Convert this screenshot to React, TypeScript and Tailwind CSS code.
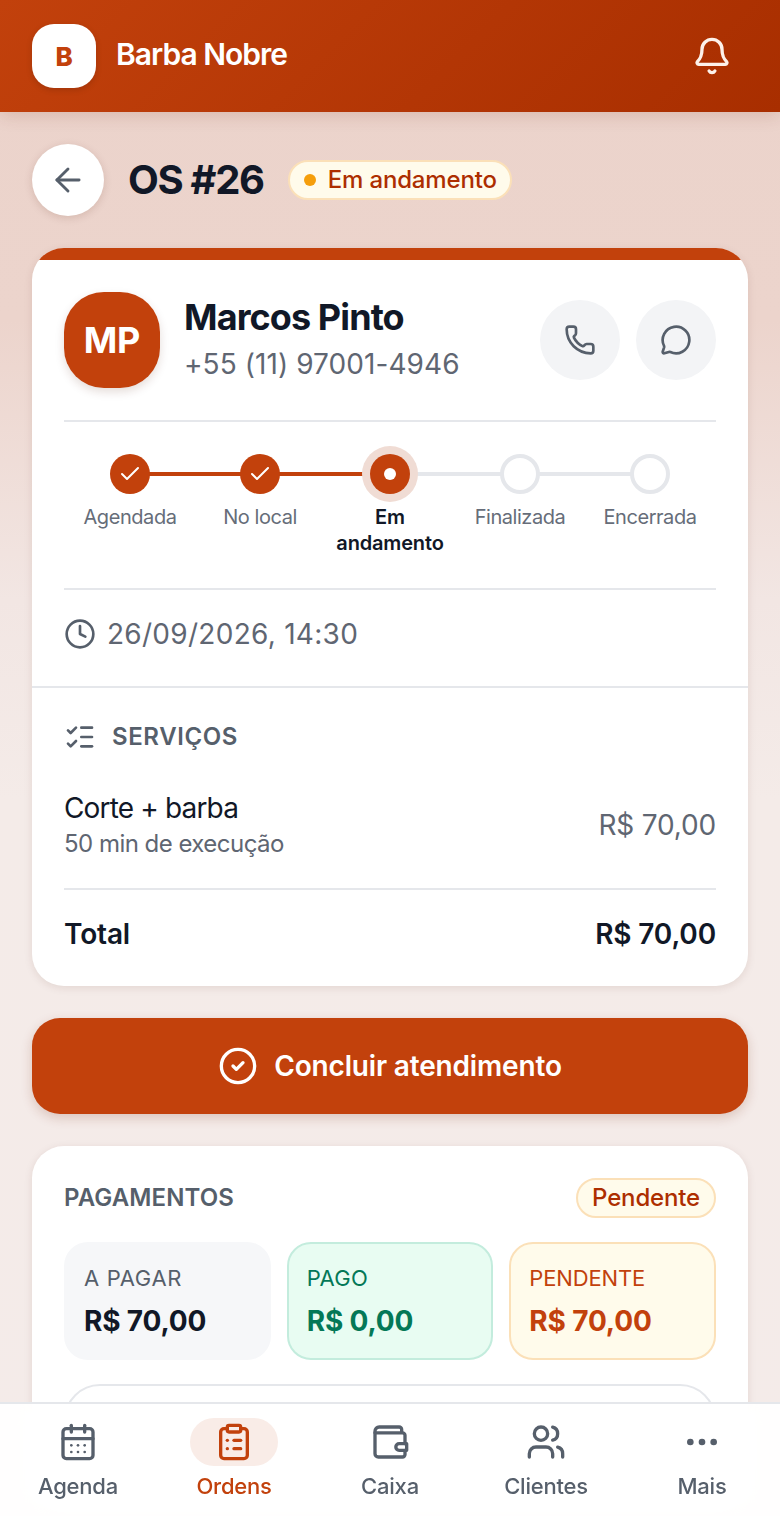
import { ArrowLeft, Bell, Check, CircleCheck, ClipboardList, Clock, Ellipsis, ListChecks, MessageCircle, Phone, Users } from "lucide-react";

const steps = [
  { label: "Agendada", state: "done" },
  { label: "No local", state: "done" },
  { label: "Em andamento", state: "active" },
  { label: "Finalizada", state: "todo" },
  { label: "Encerrada", state: "todo" },
];

function Stepper() {
  return (
    <div className="grid grid-cols-5 px-px pt-8 pb-8">
      {steps.map((s, i) => (
        <div key={s.label} className="relative flex flex-col items-center">
          {i < 4 && (
            <div className={`absolute left-1/2 top-[18px] h-1 w-full ${i < 2 ? "bg-[#c2410c]" : "bg-[#e5e7eb]"}`} />
          )}
          {s.state === "done" && (
            <div className="relative flex h-10 w-10 items-center justify-center rounded-full bg-[#c2410c]">
              <Check size={24} color="#ffffff" strokeWidth={2} />
            </div>
          )}
          {s.state === "active" && (
            <div className="relative flex h-10 w-10 items-center justify-center rounded-full bg-[#c2410c] shadow-[0_0_0_8px_#f0dcd4]">
              <div className="h-3 w-3 rounded-full bg-white" />
            </div>
          )}
          {s.state === "todo" && (
            <div className="relative h-10 w-10 rounded-full border-4 border-[#e5e7eb] bg-white" />
          )}
          <div
            className={`mt-[10px] w-[120px] text-center text-[20px] leading-[26px] ${
              s.state === "active" ? "font-semibold text-[#111827]" : "tracking-[-0.022em] text-[#666d79]"
            }`}
          >
            {s.state === "active" ? (
              <>
                Em
                <br />
                andamento
              </>
            ) : (
              s.label
            )}
          </div>
        </div>
      ))}
    </div>
  );
}

function CalendarIcon() {
  return (
    <svg width="40" height="40" viewBox="0 0 24 24" fill="none" stroke="currentColor" strokeWidth="2" strokeLinecap="round" strokeLinejoin="round">
      <path d="M8 2v4" />
      <path d="M16 2v4" />
      <rect x="3" y="4" width="18" height="18" rx="2" />
      <path d="M3 10h18" />
      <g fill="currentColor" stroke="none">
        <circle cx="8" cy="14" r="0.8" />
        <circle cx="12" cy="14" r="0.8" />
        <circle cx="16" cy="14" r="0.8" />
        <circle cx="8" cy="18" r="0.8" />
        <circle cx="12" cy="18" r="0.8" />
        <circle cx="16" cy="18" r="0.8" />
      </g>
    </svg>
  );
}

function WalletIcon() {
  return (
    <svg width="40" height="40" viewBox="0 0 24 24" fill="none" stroke="currentColor" strokeWidth="2" strokeLinecap="round" strokeLinejoin="round">
      <path d="M19 6V4.5A1.5 1.5 0 0 0 17.5 3H5.5A2.5 2.5 0 0 0 3 5.5V19a2 2 0 0 0 2 2h14.5a1.5 1.5 0 0 0 1.5-1.5V17" />
      <path d="M3 6.5h16.5A1.5 1.5 0 0 1 21 8v5" />
      <path d="M17.5 13H22v4h-4.500a2 2 0 0 1 0-4z" />
    </svg>
  );
}

function NavItem({ label, active, children }: { label: string; active?: boolean; children: React.ReactNode }) {
  return (
    <div className={`flex flex-col items-center gap-1 ${active ? "text-[#c2410c]" : "text-[#565f6b]"}`}>
      <div className={`flex h-12 w-[88px] items-center justify-center rounded-full ${active ? "bg-[#f9ece7]" : ""}`}>
        {children}
      </div>
      <span className="text-[22px] leading-[32px] font-medium tracking-[-0.01em]">{label}</span>
    </div>
  );
}

export default function App() {
  return (
    <div className="relative flex h-[1516px] w-[780px] flex-col overflow-hidden bg-[linear-gradient(180deg,#ebd3cb_0px,#ecd4cc_320px,#f2e6e3_600px,#f4ebe8_800px,#f4ebe9_1516px)] font-['Inter',sans-serif] tracking-[-0.01em]">
      <header className="flex h-[112px] shrink-0 items-center justify-between bg-[linear-gradient(135deg,#c2410c,#a82e00)] pl-8 pr-[48px] shadow-[0_4px_16px_rgba(120,40,10,0.15)]">
        <div className="flex items-center gap-5">
          <div className="flex h-16 w-16 items-center justify-center rounded-[22px] bg-white text-[26px] font-extrabold text-[#c2410c] shadow-[0_2px_6px_rgba(0,0,0,0.15)]">
            B
          </div>
          <span className="-mt-[3px] text-[30px] font-semibold tracking-[-0.033em] text-white">Barba Nobre</span>
        </div>
        <Bell size={40} color="#fdf1ea" strokeWidth={2} />
      </header>

      <main className="flex min-h-0 flex-1 flex-col px-8 pt-8">
        <div className="flex items-center gap-6">
          <div className="flex h-[72px] w-[72px] items-center justify-center rounded-full bg-white shadow-[0_2px_8px_rgba(80,30,10,0.15)]">
            <ArrowLeft size={38} color="#565f6b" strokeWidth={1.8} />
          </div>
          <h1 className="text-[40px] font-bold tracking-[-0.033em] text-[#111827]">OS #26</h1>
          <div className="flex h-10 items-center gap-3 rounded-full border-2 border-[#fbe0b8] bg-[#fffbeb] pr-[13px] pl-[14px] text-[24px] font-medium text-[#ad2e00]">
            <span className="h-3 w-3 rounded-full bg-[#f59e0b]" />
            Em andamento
          </div>
        </div>

        <section className="mt-8 shrink-0 overflow-hidden rounded-[32px] bg-white shadow-[0_2px_8px_rgba(80,30,10,0.1)]">
          <div className="h-3 bg-[#c2410c]" />
          <div className="px-8">
            <div className="flex h-[162px] items-center border-b-2 border-[#e5e7eb]">
              <div className="flex h-24 w-24 items-center justify-center rounded-[40px] bg-[#c2410c] text-[36px] font-bold text-white shadow-[0_4px_10px_rgba(80,30,10,0.15)]">
                MP
              </div>
              <div className="ml-6 flex-1">
                <div className="-mt-[4px] text-[36px] leading-[46px] font-bold tracking-[-0.025em] text-[#111827]">Marcos Pinto</div>
                <div className="mt-[6px] text-[28px] leading-[36px] tracking-[0.0025em] text-[#5f6672]">+55 (11) 97001-4946</div>
              </div>
              <div className="flex gap-4">
                <div className="flex h-20 w-20 items-center justify-center rounded-full bg-[#f3f4f6]">
                  <Phone size={32} color="#565f6b" strokeWidth={2} />
                </div>
                <div className="flex h-20 w-20 items-center justify-center rounded-full bg-[#f3f4f6]">
                  <MessageCircle size={32} color="#565f6b" strokeWidth={2} />
                </div>
              </div>
            </div>
            <Stepper />
            <div className="flex h-[98px] items-center gap-[11px] border-t-2 border-[#e5e7eb] pb-2 text-[28px] tracking-[0.01em] text-[#5f6672]">
              <Clock size={32} color="#565f6b" strokeWidth={2} />
              26/09/2026, 14:30
            </div>
          </div>
          <div className="border-t-2 border-[#e5e7eb] px-8">
            <div className="flex items-center gap-4 pt-[31px] pb-[34px]">
              <ListChecks size={32} color="#565f6b" strokeWidth={2} />
              <span className="text-[24px] font-semibold tracking-[0.025em] text-[#565f6b]">SERVIÇOS</span>
            </div>
            <div className="flex items-center justify-between border-b-2 border-[#e5e7eb] pb-[27px]">
              <div>
                <div className="text-[28px] leading-[38px] tracking-[-0.03em] text-[#111827]">Corte + barba</div>
                <div className="text-[24px] leading-[34px] tracking-[-0.022em] text-[#5f6672]">50 min de execução</div>
              </div>
              <div className="text-[28px] text-[#5f6672]">R$ 70,00</div>
            </div>
            <div className="flex h-[96px] items-center justify-between pb-2 text-[28px] font-semibold text-[#111827]">
              <span>Total</span>
              <span>R$ 70,00</span>
            </div>
          </div>
        </section>

        <button className="mt-8 flex h-24 shrink-0 items-center justify-center gap-4 rounded-[28px] bg-[#c2410c] text-[28px] font-semibold text-white shadow-[0_4px_12px_rgba(120,40,10,0.2)]">
          <CircleCheck size={40} color="#ffffff" strokeWidth={2} />
          Concluir atendimento
        </button>

        <section className="mt-8 shrink-0 rounded-[32px] bg-white p-8 shadow-[0_2px_8px_rgba(80,30,10,0.1)]">
          <div className="flex h-10 items-center justify-between">
            <span className="text-[24px] font-semibold tracking-[0.005em] text-[#565f6b]">PAGAMENTOS</span>
            <span className="flex h-10 items-center rounded-full border-2 border-[#fbe0b8] bg-[#fffbeb] px-[14px] text-[24px] font-medium text-[#ad2e00]">
              Pendente
            </span>
          </div>
          <div className="mt-6 grid grid-cols-3 gap-4">
            <div className="h-[118px] rounded-[24px] bg-[#f6f7f9] px-5 py-[22px]">
              <div className="text-[22px] leading-[28px] tracking-[0.03em] text-[#565f6b]">A PAGAR</div>
              <div className="mt-[11px] text-[28px] leading-[36px] font-bold text-[#111827]">R$ 70,00</div>
            </div>
            <div className="h-[118px] rounded-[24px] border-2 border-[#c3ecdd] bg-[#e8fcf2] px-[18px] py-5">
              <div className="text-[22px] leading-[28px] tracking-[0.015em] text-[#047857]">PAGO</div>
              <div className="mt-[11px] text-[28px] leading-[36px] font-bold text-[#047857]">R$ 0,00</div>
            </div>
            <div className="h-[118px] rounded-[24px] border-2 border-[#fbe0b8] bg-[#fffbeb] px-[18px] py-5">
              <div className="text-[22px] leading-[28px] text-[#c2410c]">PENDENTE</div>
              <div className="mt-[11px] text-[28px] leading-[36px] font-bold text-[#c2410c]">R$ 70,00</div>
            </div>
          </div>
          <div className="mt-6 h-24 rounded-[36px] border-2 border-[#e5e7eb]" />
        </section>
      </main>

      <nav className="absolute inset-x-0 bottom-0 grid h-[114px] grid-cols-5 border-t-2 border-[#e5e7eb] bg-white/95 pt-[14px] backdrop-blur-md">
        <NavItem label="Agenda"><CalendarIcon /></NavItem>
        <NavItem label="Ordens" active><ClipboardList size={40} strokeWidth={2} /></NavItem>
        <NavItem label="Caixa"><WalletIcon /></NavItem>
        <NavItem label="Clientes"><Users size={40} strokeWidth={2} /></NavItem>
        <NavItem label="Mais"><Ellipsis size={40} strokeWidth={2} /></NavItem>
      </nav>
    </div>
  );
}
